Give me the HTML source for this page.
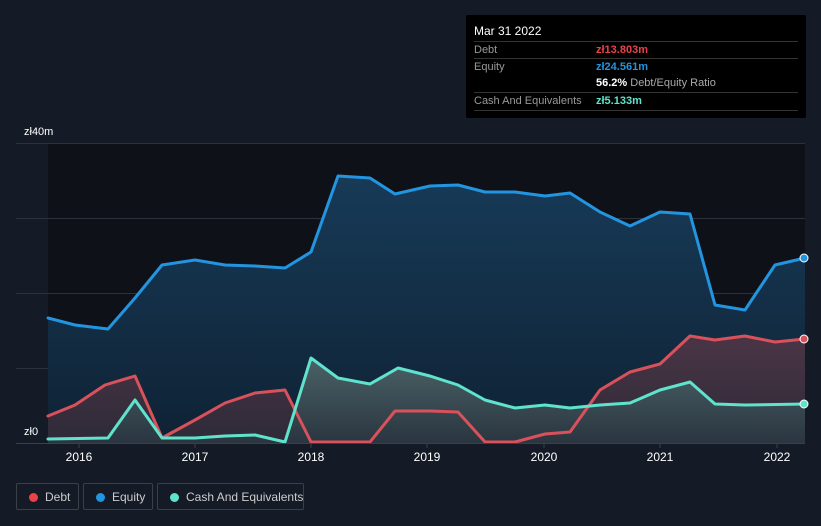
<!DOCTYPE html>
<html><head><meta charset="utf-8"><style>
html,body{margin:0;background:#151b26;width:821px;height:526px;overflow:hidden;font-family:"Liberation Sans",sans-serif;position:relative}
.tt{position:absolute;left:466px;top:15px;width:340px;height:103px;background:#000;border-radius:2px;color:#fff;font-size:11px}
.tt .r{position:absolute;left:8px;right:8px;height:17px;border-top:1px solid #333;line-height:17px}
.lbl{color:#999;position:absolute;left:0}
.val{position:absolute;left:122px;font-weight:bold;white-space:nowrap}
.leg{position:absolute;top:483px;height:27px;border:1px solid #3a3f4a;border-radius:2px;color:#ccc;font-size:12px;line-height:26px;box-sizing:border-box;white-space:nowrap}
.leg i{position:absolute;left:12px;top:9px;width:9px;height:9px;border-radius:50%}
.leg span{position:absolute;left:28px}
</style></head><body>
<svg width="821" height="526" style="position:absolute;left:0;top:0">
<defs>
<linearGradient id="ge" x1="0" y1="0" x2="0" y2="1"><stop offset="0" stop-color="#173a57"/><stop offset="1" stop-color="#0f2234"/></linearGradient>
<linearGradient id="gd" x1="0" y1="0" x2="0" y2="1"><stop offset="0" stop-color="#4a3546"/><stop offset="1" stop-color="#2e2a38"/></linearGradient>
<linearGradient id="gc" x1="0" y1="0" x2="0" y2="1"><stop offset="0" stop-color="#4a6266"/><stop offset="1" stop-color="#2a3540"/></linearGradient>
</defs>
<rect x="48" y="143" width="757" height="300" fill="#0e1118"/>
<g stroke="#2c313b" stroke-width="1">
<line x1="16" y1="143.5" x2="805" y2="143.5"/><line x1="16" y1="218.5" x2="805" y2="218.5"/><line x1="16" y1="293.5" x2="805" y2="293.5"/><line x1="16" y1="368.5" x2="805" y2="368.5"/></g>
<polygon fill="url(#ge)" points="48,318 75,325 108,329 135,298 162,265 195,260 225,265 255,266 285,268 311,252 338,176 370,178 395,194 430,186 458,185 485,192 515,192 545,196 570,193 600,212 630,226 660,212 690,214 715,305 745,310 775,265 805,258 805,443 48,443"/>
<polygon fill="url(#gd)" points="48,416 75,405 105,385 135,376 162,438 195,420 225,403 255,393 285,390 311,442 370,442 395,411 430,411 458,412 485,442 515,442 545,434 570,432 600,390 630,372 660,364 690,336 715,340 745,336 775,342 805,339 805,443 48,443"/>
<polygon fill="url(#gc)" points="48,439 108,438 135,400 162,438 195,438 225,436 255,435 285,442 311,358 338,378 370,384 398,368 430,376 458,385 485,400 515,408 545,405 570,408 600,405 630,403 660,390 690,382 715,404 745,405 805,404 805,443 48,443"/>
<g fill="none" stroke-width="3" stroke-linejoin="round" stroke-linecap="round">
<polyline stroke="#2394e0" points="48,318 75,325 108,329 135,298 162,265 195,260 225,265 255,266 285,268 311,252 338,176 370,178 395,194 430,186 458,185 485,192 515,192 545,196 570,193 600,212 630,226 660,212 690,214 715,305 745,310 775,265 805,258"/>
<polyline stroke="#d9515b" points="48,416 75,405 105,385 135,376 162,438 195,420 225,403 255,393 285,390 311,442 370,442 395,411 430,411 458,412 485,442 515,442 545,434 570,432 600,390 630,372 660,364 690,336 715,340 745,336 775,342 805,339"/>
<polyline stroke="#5fe3cc" points="48,439 108,438 135,400 162,438 195,438 225,436 255,435 285,442 311,358 338,378 370,384 398,368 430,376 458,385 485,400 515,408 545,405 570,408 600,405 630,403 660,390 690,382 715,404 745,405 805,404"/>
</g>
<circle cx="804" cy="258" r="4" fill="#2394e0" stroke="#fff" stroke-width="1"/>
<circle cx="804" cy="339" r="4" fill="#d9515b" stroke="#fff" stroke-width="1"/>
<circle cx="804" cy="404" r="4" fill="#5fe3cc" stroke="#fff" stroke-width="1"/>
<line x1="16" y1="443.5" x2="805" y2="443.5" stroke="#3a3f4a"/>
<g stroke="#3a3f4a"><line x1="79" y1="443" x2="79" y2="448"/><line x1="195" y1="443" x2="195" y2="448"/><line x1="311" y1="443" x2="311" y2="448"/><line x1="427" y1="443" x2="427" y2="448"/><line x1="544" y1="443" x2="544" y2="448"/><line x1="660" y1="443" x2="660" y2="448"/><line x1="777" y1="443" x2="777" y2="448"/></g>
<g fill="#fff" font-size="12" text-anchor="middle" font-family="Liberation Sans,sans-serif">
<text x="79" y="461">2016</text><text x="195" y="461">2017</text><text x="311" y="461">2018</text><text x="427" y="461">2019</text><text x="544" y="461">2020</text><text x="660" y="461">2021</text><text x="777" y="461">2022</text></g>
<g fill="#fff" font-size="11" font-family="Liberation Sans,sans-serif"><text x="24" y="135">zł40m</text><text x="24" y="435">zł0</text></g>
</svg>
<div class="tt">
<div style="position:absolute;left:8px;top:9px;font-size:12px">Mar 31 2022</div>
<div class="r" style="top:26px"><span class="lbl">Debt</span><span class="val" style="color:#e8424a">zł13.803m</span></div>
<div class="r" style="top:43px"><span class="lbl">Equity</span><span class="val" style="color:#2394e0">zł24.561m</span></div>
<div class="r" style="top:60px;border-top:none"><span class="val" style="color:#fff">56.2% <span style="color:#aaa;font-weight:normal">Debt/Equity Ratio</span></span></div>
<div class="r" style="top:77px"><span class="lbl">Cash And Equivalents</span><span class="val" style="color:#5fe3cc">zł5.133m</span></div>
<div class="r" style="top:95px;height:0"></div>
</div>
<div class="leg" style="left:16px;width:63px"><i style="background:#e8424a"></i><span>Debt</span></div>
<div class="leg" style="left:83px;width:70px"><i style="background:#2394e0"></i><span>Equity</span></div>
<div class="leg" style="left:157px;width:147px"><i style="background:#5fe3cc"></i><span>Cash And Equivalents</span></div>
</body></html>
